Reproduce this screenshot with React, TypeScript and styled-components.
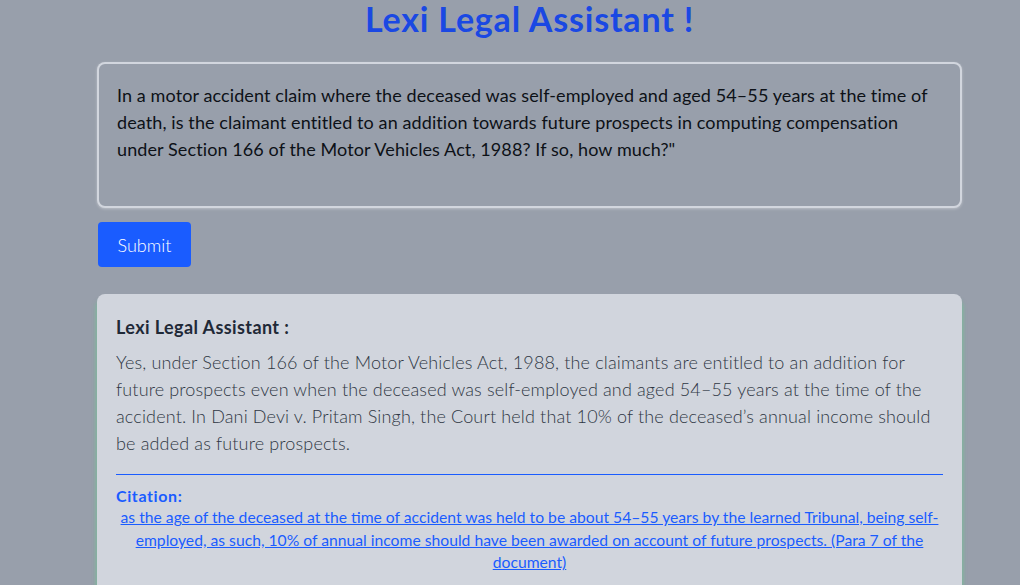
import React from "react";
import styled, { createGlobalStyle } from "styled-components";

const Global = createGlobalStyle`
  html, body {
    margin: 0;
    padding: 0;
    background: #989fab;
    font-family: Lato, "Noto Sans", sans-serif;
  }
  * { box-sizing: border-box; }
`;

const Page = styled.main`
  min-height: 585px;
  padding: 0 58px 0 97px;
  display: flex;
  flex-direction: column;
`;

const Title = styled.h1`
  margin: 0;
  height: 40px;
  line-height: 38px;
  text-align: center;
  font-size: 34px;
  letter-spacing: 0.8px;
  font-weight: 700;
  color: #1a48e3;
`;

const Form = styled.form`
  margin-top: 22px;
  display: flex;
  flex-direction: column;
  align-items: flex-start;
  gap: 14px;
`;

const Question = styled.textarea`
  width: 100%;
  height: 146px;
  resize: none;
  padding: 18px 18px 16px;
  border: 2px solid rgba(235, 238, 244, 0.7);
  border-radius: 8px;
  background: #989fab;
  box-shadow: 0 1px 3px rgba(255, 255, 255, 0.35);
  color: #0d1117;
  font-family: Lato, "Noto Sans", sans-serif;
  font-size: 18px;
  letter-spacing: 0.1px;
  line-height: 27px;
  outline: none;
`;

const SubmitButton = styled.button`
  margin-left: 1px;
  width: 93px;
  height: 45px;
  border: none;
  border-radius: 4px;
  background: #1a5cff;
  color: #ffffff;
  font-family: Lato, "Noto Sans", sans-serif;
  font-size: 18px;
  font-weight: 300;
  cursor: pointer;
`;

const Card = styled.section`
  margin-top: 27px;
  flex: 1;
  background: #d1d5dd;
  border-radius: 8px 8px 0 0;
  padding: 20px 19px 0 19px;
  box-shadow: 1px 6px 4px rgba(110, 200, 150, 0.55), -1px 6px 4px rgba(110, 200, 150, 0.55);
`;

const Speaker = styled.h2`
  margin: 0;
  font-size: 18px;
  letter-spacing: 0.4px;
  font-weight: 700;
  color: #1f2937;
  line-height: 26px;
`;

const Answer = styled.p`
  margin: 9px 0 0;
  font-size: 18px;
  letter-spacing: 0.15px;
  font-weight: 300;
  line-height: 27px;
  color: #2f3744;
`;

const Divider = styled.div`
  margin-top: 17px;
  height: 1px;
  background: #1a5cff;
`;

const CitationLabel = styled.div`
  margin-top: 11px;
  font-size: 16px;
  letter-spacing: 0.6px;
  font-weight: 700;
  color: #1a5cff;
  line-height: 20px;
`;

const CitationLink = styled.a`
  display: block;
  text-align: center;
  font-size: 15.7px;
  line-height: 22.5px;
  color: #1a5cff;
  text-decoration: underline;
`;

export default function App() {
  return (
    <>
      <Global />
      <Page>
        <Title>Lexi Legal Assistant !</Title>
        <Form onSubmit={(e) => e.preventDefault()}>
          <Question
            defaultValue={
              'In a motor accident claim where the deceased was self-employed and aged 54–55 years at the time of death, is the claimant entitled to an addition towards future prospects in computing compensation under Section 166 of the Motor Vehicles Act, 1988? If so, how much?"'
            }
          />
          <SubmitButton type="submit">Submit</SubmitButton>
        </Form>
        <Card>
          <Speaker>Lexi Legal Assistant :</Speaker>
          <Answer>
            Yes, under Section 166 of the Motor Vehicles Act, 1988, the claimants are entitled to an addition for
            future prospects even when the deceased was self-employed and aged 54–55 years at the time of the
            accident. In Dani Devi v. Pritam Singh, the Court held that 10% of the deceased’s annual income should
            be added as future prospects.
          </Answer>
          <Divider />
          <CitationLabel>Citation:</CitationLabel>
          <CitationLink href="#">
            {" "}as the age of the deceased at the time of accident was held to be about 54–55 years by the learned
            Tribunal, being self-employed, as such, 10% of annual income should have been awarded on account of future
            prospects. (Para 7 of the document)
          </CitationLink>
        </Card>
      </Page>
    </>
  );
}
